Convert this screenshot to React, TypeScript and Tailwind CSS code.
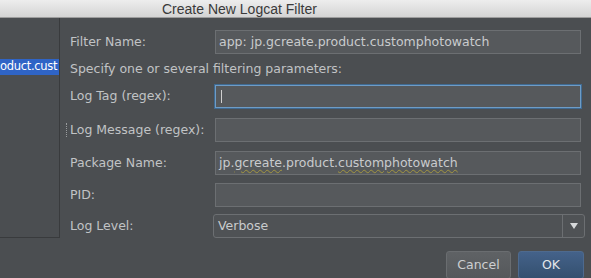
export default function App() {
  const font = "font-['DejaVu_Sans',sans-serif]";
  const field =
    "h-[24px] w-[366px] border border-[#6c6f72] bg-[#56595c] px-[3px] flex items-center text-[12.5px] text-[#c9cbcd]";

  return (
    <div className={`w-[591px] h-[278px] overflow-hidden bg-[#4b4e51] flex flex-col ${font}`}>
      {/* Title bar */}
      <div className="h-[18px] shrink-0 bg-gradient-to-b from-[#ededed] to-[#d4d4d4] border-b border-[#9d9d9d] flex items-center">
        <span className="ml-[162px] text-[14px] leading-none text-[#3a3a3a] font-['Liberation_Sans',sans-serif]">
          Create New Logcat Filter
        </span>
      </div>

      <div className="flex flex-1">
        {/* Left filter list */}
        <div className="w-[60px] h-[220px] shrink-0 border-r border-b border-[#393b3d] overflow-hidden">
          <div className="mt-[41px] h-[16px] bg-[#2f64c6] flex items-center">
            <span className="whitespace-nowrap text-[11.5px] tracking-[-0.3px] text-white">oduct.cust</span>
          </div>
        </div>

        {/* Form */}
        <div className="flex-1 pl-[10px] pt-[12px] flex flex-col text-[12.5px] text-[#c1c3c5]">
          <div className="flex items-center">
            <span className="w-[145px]">Filter Name:</span>
            <div className={`${field} h-[22px]`}>app: jp.gcreate.product.customphotowatch</div>
          </div>

          <div className="mt-[7px] h-[16px] flex items-center">
            Specify one or several filtering parameters:
          </div>

          <div className="mt-[8px] flex items-center">
            <span className="w-[145px]">Log Tag (regex):</span>
            <div className="h-[23px] w-[366px] border border-[#6e9cc6] bg-[#56595c] shadow-[0_0_0_1px_#3f6a92] flex items-center pl-[5px]">
              <div className="w-px h-[13px] bg-[#d0d0d0]" />
            </div>
          </div>

          <div className="mt-[10px] flex items-center">
            <div className="w-[145px] flex items-center">
              <div className="-ml-[4px] mr-[3px] h-[14px] border-l border-dotted border-[#9a9c9e]" />
              <span>Log Message (regex):</span>
            </div>
            <div className={field} />
          </div>

          <div className="mt-[9px] flex items-center">
            <span className="w-[145px]">Package Name:</span>
            <div className={field}>
              jp.
              <span className="underline decoration-wavy decoration-[#a39640] decoration-1 underline-offset-2">gcreate</span>
              .product.
              <span className="underline decoration-wavy decoration-[#a39640] decoration-1 underline-offset-2">customphotowatch</span>
            </div>
          </div>

          <div className="mt-[8px] flex items-center">
            <span className="w-[145px]">PID:</span>
            <div className={field} />
          </div>

          <div className="mt-[7px] flex items-center">
            <span className="w-[143px]">Log Level:</span>
            <div className="h-[24px] w-[372px] rounded-[3px] border border-[#6c6f72] bg-[#4f5255] flex items-center">
              <span className="flex-1 pl-[4px] text-[#c9cbcd]">Verbose</span>
              <div className="w-[22px] h-full border-l border-[#6c6f72] flex items-center justify-center">
                <svg width="8" height="6" viewBox="0 0 8 6">
                  <path d="M0 0 H8 L4 6 Z" fill="#d6d8da" />
                </svg>
              </div>
            </div>
          </div>

          <div className="mt-[13px] flex justify-end gap-[7px] pr-[7px]">
            <button className="w-[65px] h-[28px] rounded-[3px] border border-[#6a6d70] bg-gradient-to-b from-[#5f6265] to-[#55585b] text-[12.5px] text-[#cdcfd1]">
              Cancel
            </button>
            <button className="w-[66px] h-[28px] rounded-[3px] border border-[#4e6a8e] bg-gradient-to-b from-[#44628a] to-[#34506f] text-[12.5px] text-[#e4e7eb]">
              OK
            </button>
          </div>
        </div>
      </div>
    </div>
  );
}
